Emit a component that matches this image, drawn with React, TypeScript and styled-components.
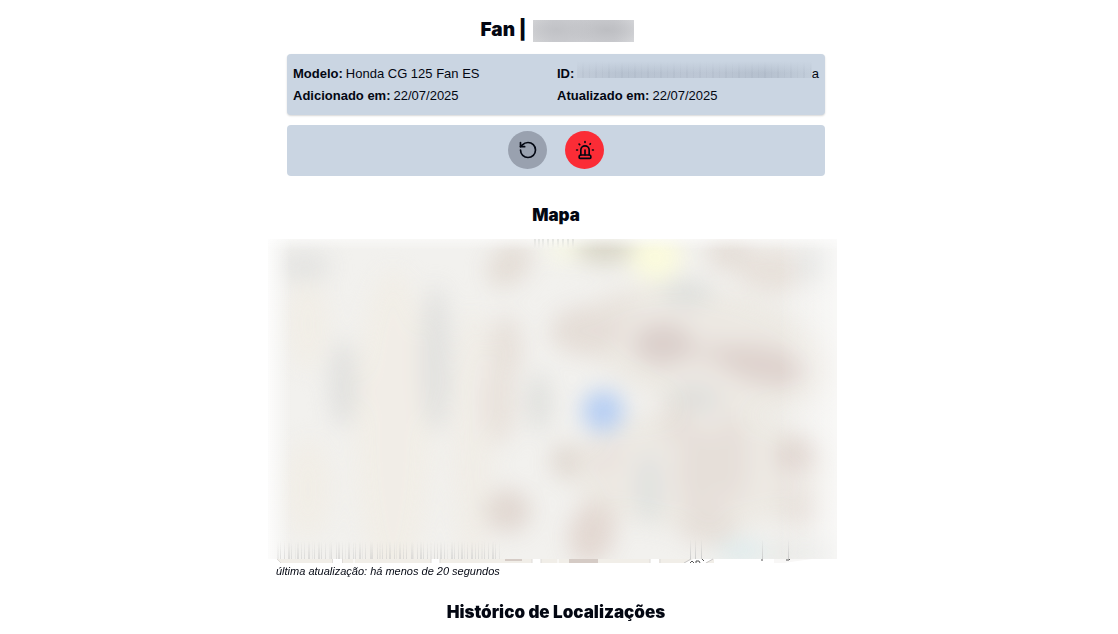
import React from "react";
import styled, { createGlobalStyle } from "styled-components";
import { RotateCcw, Siren } from "lucide-react";

const GlobalStyle = createGlobalStyle`
  * { box-sizing: border-box; }
  body {
    margin: 0;
    background: #fff;
    color: #030712;
    font-family: "Liberation Sans", Arial, sans-serif;
    font-size: 13px;
    line-height: 22px;
  }
`;

const Page = styled.main`
  display: flex;
  flex-direction: column;
  align-items: center;
  padding: 16px 6px 0 0;
`;

const Column = styled.div`
  width: 100%;
  max-width: 560px;
`;

const Title = styled.h1`
  display: flex;
  justify-content: center;
  align-items: center;
  gap: 6px;
  margin: 0 0 10px 2px;
  font-family: Inter, sans-serif;
  font-size: 19px;
  font-weight: 900;
  line-height: 28px;
`;

const Plate = styled.span`
  width: 101px;
  height: 22px;
  margin-top: 2px;
  background:
    radial-gradient(ellipse 40px 16px at 24px 10px, #c1c2c6, rgba(193, 194, 198, 0)),
    radial-gradient(ellipse 40px 16px at 74px 10px, #bdbec2, rgba(189, 190, 194, 0)),
    linear-gradient(90deg, #d4d5d7, #cbccd0 20% 80%, #d6d7da);
`;

const Cards = styled.div`
  display: flex;
  flex-direction: column;
  gap: 10px;
  margin: 0 11px;
`;

const Card = styled.section`
  border-radius: 4px;
  background: #cad5e2;
`;

const Details = styled(Card)`
  display: grid;
  grid-template-columns: 1fr 1fr;
  gap: 0 2px;
  padding: 9px 6px 8px;
  box-shadow: 0 1px 2px rgba(0, 0, 0, 0.16);
`;

const Field = styled.div`
  display: flex;
  gap: 3px;
  min-width: 0;
  white-space: nowrap;
`;

const MaskedValue = styled.span`
  display: flex;
  flex: 1;
  min-width: 0;
`;

const Mask = styled.span`
  flex: 1;
  height: 17px;
  margin-top: -2px;
  background:
    linear-gradient(#cad5e2, rgba(202, 213, 226, 0) 70%),
    repeating-linear-gradient(90deg, transparent 0 5px, rgba(100, 110, 130, 0.06) 5px 7px, transparent 7px 12px, rgba(100, 110, 130, 0.05) 12px 13px),
    linear-gradient(90deg, #c2ccd9, #b8c3d1 20%, #bdc7d5 55%, #b5c0ce 80%, #c3cedb);
`;

const Actions = styled(Card)`
  display: flex;
  justify-content: center;
  gap: 18px;
  padding: 6px 0 7px;
`;

const RoundButton = styled.button<{ $color: string }>`
  display: grid;
  place-items: center;
  width: 39px;
  height: 38px;
  padding: 0;
  border: 0;
  border-radius: 50%;
  background: ${(p) => p.$color};
  color: #030712;
  cursor: pointer;
`;

const Heading = styled.h2`
  margin: 0;
  font-family: Inter, sans-serif;
  font-size: 17px;
  font-weight: 900;
  line-height: 24px;
  text-align: center;
`;

const MapSection = styled.section`
  margin: 27px 0 20px;
`;

const MapFrame = styled.div`
  margin: 12px -1px 0 -8px;
  svg { display: block; width: 100%; height: auto; }
`;

const Updated = styled.p`
  margin: 0;
  font-size: 11px;
  font-style: italic;
  line-height: 17px;
`;

type Blob = [number, number, number, number, string, number?];

const blobs: Blob[] = [
  [125, 190, 38, 160, "#f1ede5"],
  [40, 85, 22, 46, "#f1ede5"],
  [40, 250, 24, 50, "#f1ede5"],
  [205, 200, 22, 130, "#f0ece5"],
  [440, 110, 130, 60, "#ebe7e0", 12],
  [430, 230, 130, 60, "#ebe7e0"],
  [36, 27, 28, 16, "#e1e1df"],
  [75, 145, 14, 44, "#dddddb"],
  [168, 120, 15, 74, "#dddddb"],
  [241, 26, 26, 19, "#e1d9d1", -45],
  [238, 110, 17, 34, "#e5ddd6"],
  [232, 165, 16, 40, "#e6ded7"],
  [271, 163, 12, 30, "#dbdcd9"],
  [240, 272, 23, 22, "#ddd2cb"],
  [336, 9, 32, 16, "#d3d0be"],
  [388, 18, 26, 23, "#fdfdd8"],
  [296, 10, 16, 12, "#fafbe2"],
  [462, 15, 24, 18, "#e2dad3"],
  [505, 32, 36, 22, "#e5ddd6"],
  [545, 25, 15, 20, "#dcdddb"],
  [419, 54, 25, 13, "#d9dbd8"],
  [318, 92, 36, 25, "#e2d9d2"],
  [350, 70, 22, 12, "#e6dfd8"],
  [395, 105, 30, 21, "#d5c8c3"],
  [445, 114, 26, 14, "#e2d9d3"],
  [495, 126, 46, 19, "#d9ccc6", 12],
  [425, 160, 28, 15, "#dbdcd8"],
  [297, 222, 14, 18, "#dcd3cb"],
  [408, 182, 14, 22, "#e3dbd4"],
  [432, 232, 22, 44, "#e3dbd4"],
  [463, 220, 16, 44, "#e3dbd4"],
  [530, 216, 20, 19, "#d8cac3"],
  [533, 268, 19, 22, "#e2d9d2"],
  [381, 250, 12, 36, "#dadedc"],
  [335, 218, 20, 14, "#e8e0da"],
  [324, 294, 23, 32, "#dfd2cb", 15],
  [440, 286, 30, 20, "#e3dbd4"],
  [474, 312, 26, 10, "#d7e9ec"],
  [540, 314, 36, 10, "#e1e2df"],
];

const ticks = Array.from({ length: 66 }, (_, i) => 9 + ((i * 7) % 12 > 8 ? 1 : 0) + Math.round(i * 3.4));

function LocationMap() {
  return (
    <svg viewBox="0 0 569 324" role="img" aria-label="Mapa da localização">
      <defs>
        <filter id="soft" filterUnits="userSpaceOnUse" x="-60" y="-60" width="690" height="440" colorInterpolationFilters="sRGB">
          <feGaussianBlur stdDeviation="11" />
        </filter>
        <linearGradient id="left"><stop stopColor="#fff" /><stop offset="1" stopColor="#fff" stopOpacity="0" /></linearGradient>
        <linearGradient id="right"><stop stopColor="#fff" stopOpacity="0" /><stop offset="1" stopColor="#fff" /></linearGradient>
        <linearGradient id="top" x2="0" y2="1"><stop stopColor="#fff" stopOpacity=".5" /><stop offset="1" stopColor="#fff" stopOpacity="0" /></linearGradient>
        <linearGradient id="tick" x2="0" y2="1"><stop stopColor="#c9c9c7" stopOpacity="0" /><stop offset="1" stopColor="#c3c3c3" stopOpacity=".8" /></linearGradient>
        <linearGradient id="tickTop" x2="0" y2="1"><stop stopColor="#c3c6c3" stopOpacity=".8" /><stop offset="1" stopColor="#c9c9c7" stopOpacity="0" /></linearGradient>
        <clipPath id="area"><rect width="569" height="320" /></clipPath>
      </defs>
      <g clipPath="url(#area)">
        <rect width="569" height="320" fill="#f2f1ee" />
        <g filter="url(#soft)" opacity=".8">
          {blobs.map(([x, y, rx, ry, color, angle = 0], i) => (
            <ellipse key={i} cx={x} cy={y} rx={rx} ry={ry} fill={color} transform={`rotate(${angle} ${x} ${y})`} />
          ))}
          <circle cx="335" cy="172" r="21" fill="#a6c5f5" />
        </g>
        <rect width="24" height="320" fill="url(#left)" opacity=".8" />
        <rect x="509" width="60" height="320" fill="url(#right)" opacity=".5" />
        <rect width="569" height="12" fill="url(#top)" />
        {ticks.map((x, i) => (
          <rect key={i} x={x} y="302" width={i % 3 ? 1 : 2} height="18" fill="url(#tick)" opacity={i % 5 ? 0.6 : 0.3} />
        ))}
        {[266, 270, 274, 279, 284, 289, 294, 299, 304].map((x) => (
          <rect key={x} x={x} width="2" height="9" fill="url(#tickTop)" opacity=".5" />
        ))}
        {[422, 427, 433, 494, 520].map((x) => (
          <rect key={x} x={x} y="300" width="1" height="20" fill="url(#tick)" />
        ))}
      </g>
      <g fill="#f1eee8">
        <path d="M9 320h55v4H13z" />
        <rect x="74" y="320" width="89" height="4" />
        <rect x="172" y="320" width="92" height="4" />
        <rect x="273" y="320" width="109" height="4" />
        <rect x="391" y="320" width="55" height="4" />
        <path d="M506 320h38l-28 4h-10z" fill="#f8f7f6" />
      </g>
      <g fill="#d5cbc5">
        <rect x="237" y="320" width="17" height="2" />
        <rect x="301" y="320" width="29" height="4" />
      </g>
      <path d="M9 320l4 4M64.500 320v4M74.500 320v4M163 320v4M172 320v4M264 320v4M273 320v4M382 320v4M392 320v4" stroke="#dedbd8" fill="none" />
      <path d="M290 320v4M86 320v4" stroke="#fff" />
      <path d="M417 324l8-4h20l-8 4z" fill="#fff" />
      <path d="M416 324l7-4M438 324l7-4" stroke="#c9c8c8" />
      <path d="M422 324l2-2 2 2M428 324v-2l3 0 1 2M434 320l2 2M494 320v2M518 321h3l1-1" stroke="#555" fill="none" />
    </svg>
  );
}

export default function App() {
  return (
    <>
      <GlobalStyle />
      <Page>
        <Column>
          <Title>Fan | <Plate /></Title>
          <Cards>
            <Details>
              <Field><strong>Modelo:</strong> Honda CG 125 Fan ES</Field>
              <Field><strong>ID:</strong><MaskedValue><Mask />a</MaskedValue></Field>
              <Field><strong>Adicionado em:</strong> 22/07/2025</Field>
              <Field><strong>Atualizado em:</strong> 22/07/2025</Field>
            </Details>
            <Actions>
              <RoundButton type="button" $color="#99a1af" aria-label="Atualizar"><RotateCcw size={20} /></RoundButton>
              <RoundButton type="button" $color="#fb2c36" aria-label="Alarme"><Siren size={20} /></RoundButton>
            </Actions>
          </Cards>
          <MapSection>
            <Heading>Mapa</Heading>
            <MapFrame><LocationMap /></MapFrame>
            <Updated>última atualização: há menos de 20 segundos</Updated>
          </MapSection>
          <Heading>Histórico de Localizações</Heading>
        </Column>
      </Page>
    </>
  );
}
